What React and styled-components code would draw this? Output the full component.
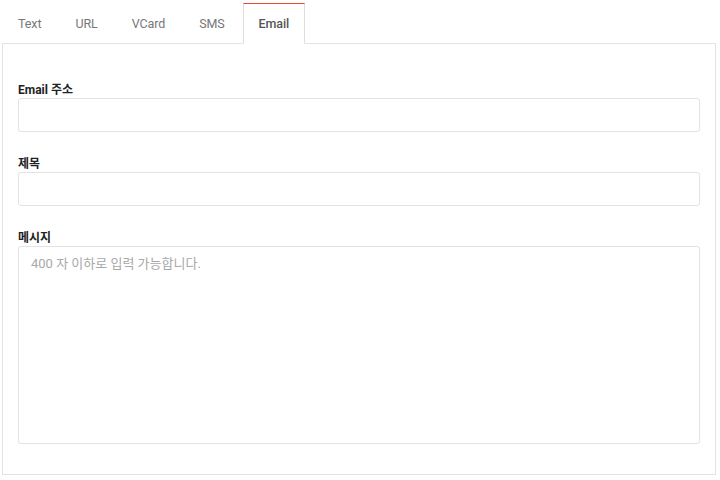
import React, { useState } from "react";
import styled, { createGlobalStyle } from "styled-components";

const GlobalStyle = createGlobalStyle`
  html, body {
    margin: 0;
    padding: 0;
    background: #ffffff;
  }
  body {
    font-family: Roboto, "Noto Sans CJK KR", sans-serif;
    color: #333;
  }
  * { box-sizing: border-box; }
`;

const TABS = ["Text", "URL", "VCard", "SMS", "Email"];

export default function App() {
  const [active, setActive] = useState("Email");
  const [email, setEmail] = useState("");
  const [subject, setSubject] = useState("");
  const [message, setMessage] = useState("");

  return (
    <Page>
      <GlobalStyle />
      <TabList>
        {TABS.map((t) => (
          <Tab key={t} $active={t === active} onClick={() => setActive(t)}>
            {t}
          </Tab>
        ))}
      </TabList>
      <Panel>
        <Group>
          <Label htmlFor="email">Email 주소</Label>
          <Input id="email" type="text" value={email} onChange={(e) => setEmail(e.target.value)} />
        </Group>
        <Group>
          <Label htmlFor="subject">제목</Label>
          <Input id="subject" type="text" value={subject} onChange={(e) => setSubject(e.target.value)} />
        </Group>
        <Group>
          <Label htmlFor="message">메시지</Label>
          <TextArea
            id="message"
            placeholder="400 자 이하로 입력 가능합니다."
            maxLength={400}
            value={message}
            onChange={(e) => setMessage(e.target.value)}
          />
        </Group>
      </Panel>
    </Page>
  );
}

const Page = styled.div`
  padding: 3px 4px 5px 2px;
  display: flex;
  flex-direction: column;
`;

const TabList = styled.div`
  display: flex;
  gap: 2px;
  border-bottom: 1px solid #dfe4e4;
`;

const Tab = styled.button`
  font-family: Roboto, "Noto Sans CJK KR", sans-serif;
  font-size: 12.5px;
  letter-spacing: -0.1px;
  line-height: 18px;
  padding: 11px 15px 10px;
  margin-bottom: -1px;
  background: ${(p) => (p.$active ? "#fff" : "transparent")};
  color: ${(p) => (p.$active ? "#555" : "#777")};
  font-weight: ${(p) => (p.$active ? 500 : 400)};
  border: 1px solid ${(p) => (p.$active ? "#dddddd" : "transparent")};
  border-top: 1px solid ${(p) => (p.$active ? "#e94b30" : "transparent")};
  border-bottom-color: ${(p) => (p.$active ? "#fff" : "transparent")};
  border-radius: 0;
  cursor: pointer;
`;

const Panel = styled.div`
  border: 1px solid #dfe4e4;
  border-top: none;
  padding: 38px 15px 30px;
  display: flex;
  flex-direction: column;
  gap: 24px;
`;

const Group = styled.div`
  display: flex;
  flex-direction: column;
`;

const Label = styled.label`
  font-size: 12px;
  line-height: 16px;
  font-weight: 700;
  color: #222;
`;

const Input = styled.input`
  height: 34px;
  border: 1px solid #e3e3e3;
  border-radius: 3px;
  padding: 6px 12px;
  font-size: 13px;
  font-family: inherit;
  outline: none;
`;

const TextArea = styled.textarea`
  height: 198px;
  border: 1px solid #e3e3e3;
  border-radius: 3px;
  padding: 8px 12px;
  font-size: 13px;
  line-height: 18px;
  font-family: Roboto, "Noto Sans CJK KR", sans-serif;
  resize: none;
  outline: none;
  &::placeholder {
    color: #a8a8a8;
  }
`;
